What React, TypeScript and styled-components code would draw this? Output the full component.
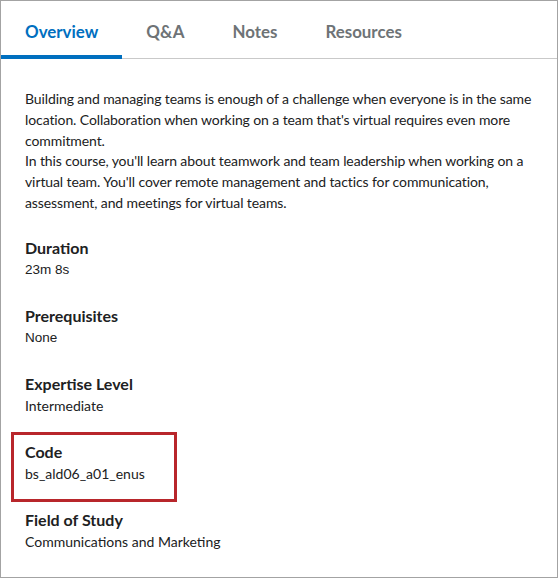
import React from "react";
import styled, { createGlobalStyle } from "styled-components";

const Global = createGlobalStyle`
  html, body { margin: 0; padding: 0; background: #ffffff; }
  body { font-family: Lato, "Noto Sans", sans-serif; }
`;

const Frame = styled.div`
  position: relative;
  box-sizing: border-box;
  width: 558px;
  height: 578px;
  border: 1px solid #a3a3a3;
  background: #ffffff;
  overflow: hidden;
`;

const TabBar = styled.div`
  display: flex;
  align-items: flex-end;
  height: 57px;
  border-bottom: 1px solid #c9c9c9;
`;

const Tab = styled.div<{ $active?: boolean }>`
  box-sizing: border-box;
  height: 57px;
  padding: 6px 24px 0 24px;
  display: flex;
  align-items: center;
  font-family: Lato, sans-serif;
  font-weight: 700;
  font-size: 16.9px;
  color: ${(p) => (p.$active ? "#006fbf" : "#6e7376")};
  border-bottom: 4px solid ${(p) => (p.$active ? "#006fbf" : "transparent")};
  margin-bottom: -1px;
`;

const Body = styled.div`
  padding: 30px 12px 0 24px;
  display: flex;
  flex-direction: column;
  gap: 15px;
`;

const Description = styled.div`
  font-family: Lato, sans-serif;
  font-size: 14px;
  letter-spacing: -0.1px;
  line-height: 20.8px;
  color: #202122;
  margin-bottom: 8px;
`;

const Section = styled.div`
  display: flex;
  flex-direction: column;
  height: 53px;
`;

const Label = styled.div`
  font-family: Lato, sans-serif;
  font-weight: 700;
  font-size: 16px;
  line-height: 22px;
  color: #202122;
`;

const Value = styled.div<{ $plain?: boolean }>`
  font-family: ${(p) => (p.$plain ? '"Liberation Sans", Arial, sans-serif' : "Lato, sans-serif")};
  font-size: ${(p) => (p.$plain ? "13.5px" : "14px")};
  line-height: 22px;
  color: #202122;
`;

const Highlight = styled.div`
  position: absolute;
  left: 10px;
  top: 431px;
  width: 166px;
  height: 70px;
  box-sizing: border-box;
  border: 3.5px solid #b8262b;
  pointer-events: none;
`;

const tabs = ["Overview", "Q&A", "Notes", "Resources"];

const details: { label: string; value: string; plain?: boolean }[] = [
  { label: "Duration", value: "23m 8s", plain: true },
  { label: "Prerequisites", value: "None", plain: true },
  { label: "Expertise Level", value: "Intermediate" },
  { label: "Code", value: "bs_ald06_a01_enus" },
  { label: "Field of Study", value: "Communications and Marketing" },
];

export default function App() {
  return (
    <>
      <Global />
      <Frame>
        <TabBar>
          {tabs.map((t, i) => (
            <Tab key={t} $active={i === 0}>
              {t}
            </Tab>
          ))}
        </TabBar>
        <Body>
          <Description>
            Building and managing teams is enough of a challenge when everyone is in the same
            location. Collaboration when working on a team that's virtual requires even more
            commitment.
            <br />
            In this course, you'll learn about teamwork and team leadership when working on a
            virtual team. You'll cover remote management and tactics for communication,
            assessment, and meetings for virtual teams.
          </Description>
          {details.map((d) => (
            <Section key={d.label}>
              <Label>{d.label}</Label>
              <Value $plain={d.plain}>{d.value}</Value>
            </Section>
          ))}
        </Body>
        <Highlight />
      </Frame>
    </>
  );
}
